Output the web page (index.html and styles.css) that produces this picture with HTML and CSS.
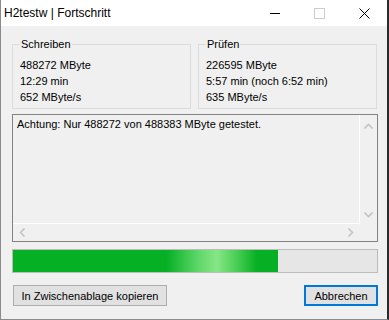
FILE: index.html
```html
<!DOCTYPE html>
<html lang="de">
<head>
    <meta charset="UTF-8">
    <title>H2testw | Fortschritt</title>
    <link rel="stylesheet" href="styles.css">
</head>
<body>
    <div class="window">
        <div class="titlebar">
            <span class="title">H2testw | Fortschritt</span>
            <div class="caption-buttons">
                <span class="cap-btn">
                    <svg width="10" height="10" viewBox="0 0 10 10"><path d="M0 5.5h10" stroke="#000" stroke-width="1"/></svg>
                </span>
                <span class="cap-btn">
                    <svg width="11" height="11" viewBox="0 0 11 11"><rect x="0.5" y="0.5" width="10" height="10" fill="none" stroke="#cccccc" stroke-width="1"/></svg>
                </span>
                <span class="cap-btn">
                    <svg width="11" height="11" viewBox="0 0 11 11"><path d="M0.5 0.5l10 10M10.5 0.5l-10 10" stroke="#000" stroke-width="1"/></svg>
                </span>
            </div>
        </div>

        <div class="content">
            <div class="groups">
                <fieldset class="group">
                    <legend>Schreiben</legend>
                    <div>488272 MByte</div>
                    <div>12:29 min</div>
                    <div>652 MByte/s</div>
                </fieldset>
                <fieldset class="group">
                    <legend>Prüfen</legend>
                    <div>226595 MByte</div>
                    <div>5:57 min (noch 6:52 min)</div>
                    <div>635 MByte/s</div>
                </fieldset>
            </div>

            <div class="log">
                <div class="log-text">Achtung: Nur 488272 von 488383 MByte getestet.</div>
                <div class="vscroll">
                    <svg width="9" height="6" viewBox="0 0 9 6"><path d="M0.5 5.5l4-4 4 4" fill="none" stroke="#c4c4c4" stroke-width="1.6"/></svg>
                    <svg width="9" height="6" viewBox="0 0 9 6"><path d="M0.5 0.5l4 4 4-4" fill="none" stroke="#c4c4c4" stroke-width="1.6"/></svg>
                </div>
                <div class="hscroll">
                    <svg width="6" height="9" viewBox="0 0 6 9"><path d="M5.5 0.5l-4 4 4 4" fill="none" stroke="#c4c4c4" stroke-width="1.6"/></svg>
                    <svg width="6" height="9" viewBox="0 0 6 9"><path d="M0.5 0.5l4 4-4 4" fill="none" stroke="#c4c4c4" stroke-width="1.6"/></svg>
                </div>
                <div class="corner"></div>
            </div>

            <div class="progress">
                <div class="progress-fill" style="width: 72.8%"></div>
            </div>

            <div class="buttons">
                <button class="btn">In Zwischenablage kopieren</button>
                <button class="btn btn-default">Abbrechen</button>
            </div>
        </div>
    </div>
</body>
</html>
```

FILE: styles.css
```css
html, body {
    margin: 0;
    padding: 0;
    background: #f0f0f0;
}
body {
    font-family: "Liberation Sans", Arial, sans-serif;
    font-size: 11px;
    color: #000;
}
.window {
    width: 389px;
    height: 320px;
    box-sizing: border-box;
    border-left: 1px solid #8a8a8a;
    border-right: 2px solid #2b2b2b;
    border-bottom: 1px solid #8a8a8a;
    background: #f0f0f0;
    display: flex;
    flex-direction: column;
}
.titlebar {
    height: 26px;
    background: #fff;
    display: flex;
    align-items: center;
    justify-content: space-between;
}
.title {
    padding-left: 3px;
    font-size: 12px;
}
.caption-buttons {
    display: flex;
    height: 26px;
}
.cap-btn {
    width: 45px;
    display: flex;
    align-items: center;
    justify-content: center;
}
.content {
    padding: 10px 9px 0 11px;
    flex: 1;
    display: flex;
    flex-direction: column;
}
.groups {
    display: flex;
    gap: 7px;
}
.group {
    margin: 0;
    width: 179px;
    height: 73px;
    box-sizing: border-box;
    border: 1px solid #dcdcdc;
    padding: 5px 7px 1px 7px;
    line-height: 16px;
}
.group legend {
    padding: 0 1px;
    margin-left: 0;
    line-height: 16px;
}
.log {
    margin-top: 5px;
    width: 366px;
    height: 128px;
    box-sizing: border-box;
    border: 1px solid #828282;
    display: grid;
    grid-template-columns: 1fr 17px;
    grid-template-rows: 1fr 17px;
}
.log-text {
    border-right: 1px solid #fff;
    border-bottom: 1px solid #fff;
    padding: 1px 4px;
    line-height: 16px;
}
.vscroll {
    display: flex;
    flex-direction: column;
    justify-content: space-between;
    align-items: center;
    padding: 8px 0 6px;
}
.hscroll {
    display: flex;
    justify-content: space-between;
    align-items: center;
    padding: 0 6px 0 6px;
}
.progress {
    margin-top: 7px;
    width: 366px;
    height: 24px;
    box-sizing: border-box;
    border: 1px solid #bcbcbc;
    background: #e6e6e6;
}
.progress-fill {
    height: 100%;
    background: linear-gradient(90deg, #06b025 0%, #06b025 58%, #5fd86a 70%, #86e686 77%, #3cc84b 86%, #06b025 92%, #06b025 100%);
}
.buttons {
    margin-top: 12px;
    display: flex;
    justify-content: space-between;
    width: 366px;
}
.btn {
    font-family: "Liberation Sans", Arial, sans-serif;
    font-size: 11px;
    white-space: nowrap;
    height: 21px;
    padding: 0;
    background: #e1e1e1;
    border: 1px solid #adadad;
    color: #000;
    margin-left: 1px;
    width: 154px;
}
.btn-default {
    width: 74px;
    border: 1px solid #0078d7;
    box-shadow: inset 0 0 0 1px #0078d7;
    margin-left: 0;
}
```
